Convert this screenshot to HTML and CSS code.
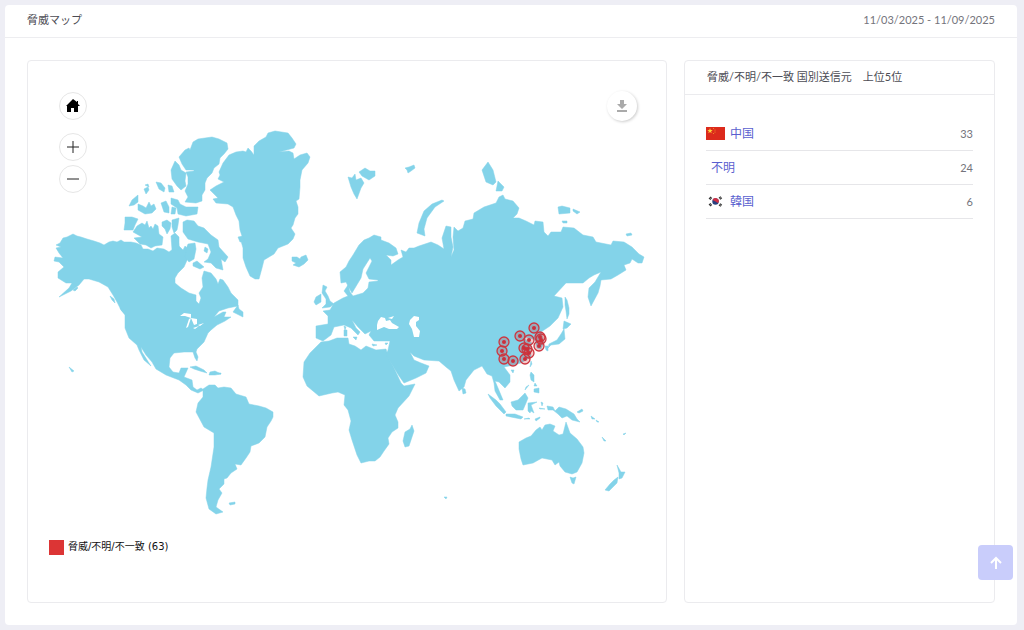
FILE: index.html
```html
<!DOCTYPE html>
<html lang="ja">
<head>
<meta charset="utf-8">
<meta name="viewport" content="width=device-width, initial-scale=1">
<title>脅威マップ</title>
<link rel="stylesheet" href="styles.css">
</head>
<body>
<main class="card">
  <header class="card-header">
    <h1 class="title">脅威マップ</h1>
    <span class="dates">11/03/2025 - 11/09/2025</span>
  </header>
  <div class="card-body">
    <section class="panel map-panel">
      <svg class="map" viewBox="27 61 638 462" role="img" aria-label="世界地図">
        <g class="land">
          <!-- North America -->
          <path d="M58 253L55 248L60 247L55 245L59 243L62 238L66 237L72 234L76 236L80 237L86 239L93 241L99 243L103 245L108 242L112 241L116 242L120 240L123 242L130 242L135 243L140 245L142 249L147 249L152 251L156 248L163 249L168 252L172 249L173 245L171 241L174 236L177 239L178 246L182 250L184 246L187 249L187 258L183 267L177 273L174 278L174 283L180 288L188 293L195 295L195 301L198 304L200 298L198 293L202 287L201 278L203 271L210 273L215 279L217 284L219 279L222 280L227 287L230 293L237 300L237 306L227 308L218 311L213 317L222 312L225 312L223 317L230 317L224 321L216 325L210 330L207 333L203 342L196 349L195 352L197 357L196 361L194 358L192 352L183 352L173 353L169 358L168 367L172 372L178 373L180 368L187 368L183 377L191 380L192 387L196 390L200 388L203 390L197 393L190 390L185 385L178 380L165 375L155 369L151 362L145 355L140 347L141 352L148 363L150 366L143 360L138 350L136 345L128 338L124 328L124 315L120 310L116 302L112 295L107 287L98 282L88 279L83 279L78 285L70 291L58 297L68 288L71 283L65 283L57 278L57 272L63 267L58 262L53 261L54 257L62 258Z"/>
          <path d="M109 296L113 299L114 303L111 300ZM119 308L124 310L127 314L127 316L121 311ZM232 312L237 305L238 309L242 312L242 317L238 315ZM72 290L76 287L77 288L74 291Z"/>
          <path d="M182 222L186 220L193 221L197 226L203 228L210 235L217 240L218 247L227 257L224 262L220 259L222 270L215 268L210 263L203 262L207 259L210 252L207 244L197 242L187 239L182 232Z"/>
          <path d="M187 244L194 243L195 249L193 259L188 262L184 257L185 249ZM192 263L196 261L203 267L199 269L192 266ZM204 247L207 249L206 253L203 251Z"/>
          <path d="M124 217L131 217L137 219L134 225L132 230L123 230L124 223Z"/>
          <path d="M132 232L136 226L141 223L144 225L146 221L148 228L150 226L152 229L154 224L157 226L158 234L162 237L161 245L154 246L150 248L145 245L139 244L133 238L141 237Z"/>
          <path d="M161 222L166 220L170 223L169 229L166 234L164 229L161 226ZM171 220L178 218L177 225L176 230L173 233L171 227ZM170 236L174 233L178 237L178 250L171 250Z"/>
          <path d="M128 206L131 200L137 195L137 202L133 205ZM143 189L147 187L148 190L145 194ZM144 185L147 184L148 187ZM155 182L160 183L164 188L163 192L158 189ZM167 185L171 186L173 192L168 192ZM137 204L142 206L145 208L148 202L150 206L153 204L155 209L151 213L144 214L137 210ZM160 203L165 201L168 207L168 213L163 212ZM171 207L175 208L174 214L170 214Z"/>
          <path d="M170 198L177 200L179 204L185 207L197 207L196 214L185 216L177 214L176 208L170 204Z"/>
          <path d="M170 170L174 161L178 165L180 170L185 173L184 181L185 186L180 190L176 186L171 179Z"/>
          <path d="M178 157L184 150L188 148L189 150L192 142L197 139L204 138L211 137L218 139L226 143L227 149L223 154L219 158L218 164L213 168L211 173L206 178L204 183L204 190L201 195L201 201L195 203L184 202L187 197L184 191L187 184L187 177L185 172L193 171L193 170L185 170L181 164Z"/>
          <path d="M189 367L195 366L203 370L206 373L199 371L193 369ZM209 372L214 371L220 374L214 375L208 375ZM217 373L220 373L220 374L217 374ZM68 367L73 371L71 372Z"/>
          <!-- Greenland, Iceland, Svalbard -->
          <path d="M209 190L215 186L223 182L217 179L219 175L218 172L222 163L228 155L235 152L242 151L245 152L247 148L250 151L253 155L253 146L258 141L265 137L267 133L274 131L287 133L291 138L295 144L293 148L278 152L288 151L292 153L293 159L299 155L306 153L309 157L307 163L301 170L299 180L299 187L298 199L295 201L297 207L297 214L294 218L292 225L290 228L294 234L292 239L287 244L277 248L273 254L263 260L261 268L258 279L254 279L249 276L245 267L242 258L242 248L240 241L241 236L239 230L238 221L235 215L232 207L227 204L215 203L212 199L217 198Z"/>
          <path d="M237 237L242 236L244 241L239 242ZM291 257L296 257L299 259L300 257L305 255L307 260L303 264L298 267L292 265L295 263L291 261Z"/>
          <path d="M347 177L351 178L354 174L355 180L360 178L363 183L360 188L356 199L353 194L350 187ZM358 172L364 168L369 171L374 171L374 176L368 180L361 176ZM404 168L408 167L413 165L414 168L410 171L407 173L406 170Z"/>
          <!-- South America -->
          <path d="M202 389L208 385L214 385L217 388L223 387L230 388L235 394L245 397L248 404L258 406L265 408L272 412L272 417L270 421L266 427L264 437L258 443L250 446L249 452L245 458L240 465L234 464L236 469L230 473L226 478L223 479L223 484L218 489L221 493L217 500L215 507L222 512L215 514L208 509L205 498L206 488L207 480L210 467L213 447L213 433L203 427L195 412L197 403L202 397Z"/>
          <path d="M228 503L234 502L234 504L229 505Z"/>
          <!-- Africa -->
          <path d="M320 342l8-1 8-3 11 0 1 6 6 2 6 4 5-4 10 4 10-1 3 10 5 9 7 15 3 3 11-2-6 12-11 12-3 7 3 7 0 6-6 4-4 6 1 6-5 7-4 6-5 4-6 0-8 2-4-8-5-15-3-10 2-9-3-11-4-5 1-10-7-3-6 1-13 3-6-5-6-5-4-9 1-15 6-9z"/>
          <path d="M411 425l2 6-5 15-4 1-2-6 2-9 5-3z"/>
          <!-- Eurasia -->
          <path d="M340 283L339 272L345 267L348 261L352 255L358 245L363 240L368 238L373 235L380 237L380 240L388 243L395 248L397 254L392 256L385 255L390 260L390 265L397 260L402 257L400 250L405 252L408 248L413 248L418 246L424 244L430 242L437 245L443 249L441 238L445 226L450 227L450 237L452 247L450 257L453 250L452 237L453 227L457 231L462 228L464 221L472 219L473 213L483 207L489 205L495 203L498 197L502 195L504 199L512 201L518 208L516 214L512 218L518 218L525 221L533 225L534 221L542 222L543 232L547 236L550 232L560 232L562 227L573 228L582 235L592 237L595 242L610 245L612 241L623 242L631 247L638 254L643 257L641 263L637 263L631 259L629 263L623 265L625 270L617 275L610 279L600 280L599 286L597 293L590 306L587 297L588 288L594 282L600 272L593 275L588 278L582 283L565 283L553 296L561 298L562 307L557 318L549 326L540 332L543 342L540 349L536 348L534 340L529 338L523 337L526 341L531 343L529 348L530 357L520 363L508 366L503 367L509 375L509 382L504 388L498 382L494 381L497 388L502 400L499 400L494 391L493 383L491 376L486 374L481 366L473 370L465 380L463 387L458 391L453 380L450 371L445 367L438 361L423 360L413 356L409 352L413 360L420 363L428 366L425 373L415 378L403 383L398 376L390 363L385 355L387 350L389 341L373 341L368 335L370 331L364 334L357 327L351 320L355 328L359 332L357 335L350 328L343 325L333 327L330 335L322 341L315 338L315 326L327 324L327 316L322 311L329 310L333 303L342 298L347 296L343 291L347 285L349 292L352 296L362 293L367 288L368 282L377 281L377 280L368 279L365 273L371 261L369 258L362 269L360 278L354 288L351 293L347 286L345 282Z"/>
          <path d="M322 285l4 2-2 4 3 5 2 5 4 3-4 3-8 1 4-4 0-5-4-6zM315 297l5-3 0 8-5 3-2-3zM343 326l2 1-1 3zM343 330l3 0 0 6-3 0zM352 337l4 0-1 3zM371 344l5 1-4 1zM384 343l3 0-2 2z"/>
          <path d="M443 201L434 207L426 218L423 229L424 236L416 233L418 223L423 211L431 204L441 200ZM487 162L492 170L495 182L492 185L485 182L481 170ZM497 181L503 187L501 191L495 191ZM557 207L561 206L569 208L569 213L558 214ZM572 209L579 212L576 214L572 211ZM561 221L566 221L566 223L562 223ZM625 234L630 233L631 235L626 236Z"/>
          <path d="M564 297l2 3 2 8 0 6-2 5-1-8-1-6zM563 321l7 3-4 4-4 1zM563 329l1 10-6 5-8 1-3 3 1-4 8-4 4-6zM544 346l3 0 0 5-2-1z"/>
          <!-- South-East Asia and Oceania -->
          <path d="M461 388l3 1 1 4-3 1zM530 361l1 3-2 3zM510 370l3 0-1 3zM530 372l3 3 0 7-3-2-1-5zM533 389l5-1 0 5-5-1zM534 383l2 3-3 0zM528 385l-4 5 1-3zM487 394l8 6 4 4 6 8-2 2-8-8-6-8zM505 414l9 0 8 3-2 2-15-3zM523 419l5-1 1 1zM534 419l5-2 0 1-4 3z"/>
          <path d="M510 402l7-2 7-7 3 5-2 5-3 7-7 0-4-4zM527 403l9-1-6 3 3 8-3-2-1 2-2-2zM540 402l2 1-1 3zM538 408l6 1-5 0zM546 406l6 1 2 4 4-4 7 2 8 5 3 5 3 3-8-2-5-4-5 2-4-4-5-4-5 0zM576 412l5-3 1 2-4 2zM590 416l4 3-3 0zM595 420l3 2-2 0zM601 437l4 4-2 0zM622 434l3-1-2 2z"/>
          <path d="M518 442L525 438L530 436L535 430L539 427L541 430L544 425L549 424L554 426L552 431L558 435L562 434L565 422L569 433L576 439L582 447L583 453L581 463L576 472L571 474L564 472L559 466L558 462L554 465L551 460L541 458L532 463L522 465L520 459L518 449Z"/>
          <path d="M569 477l3 1 3-1-2 7-2-1zM616 465l4 7 4 0-3 6-3 1 0-6zM617 477l-1 6-8 8-4-1 5-6 4-4zM443 497l3 0-1 2z"/>
        </g>
        <g class="water">
          <path d="M377 321l3-4 4 1 1 3 4-1 2 3 7 4-2 2-8 0-5-2-7 3 0-5zM387 318l6-2-2 3zM409 320l4-4 5 1 0 3-3 2 0 4 4 5-1 6-5 0-2-8-3-5z"/>
          <path d="M179 316l4-3 7 1 0 4-6-2zM188 319l-3 9 2-1 3-9zM190 318l6 1 0 5-3 1zM192 328l6-2-4 3zM197 325l6-2-4 3z"/>
        </g>
        <g class="pins">
          <g><circle cx="533" cy="328" r="5"/><circle cx="519" cy="336" r="5"/><circle cx="503" cy="342" r="5"/><circle cx="501" cy="351" r="5"/><circle cx="503" cy="359" r="5"/><circle cx="512" cy="361" r="5"/><circle cx="524" cy="359" r="5"/><circle cx="528" cy="340" r="5"/><circle cx="523" cy="348" r="5"/><circle cx="526" cy="349" r="5"/><circle cx="528" cy="353" r="5"/><circle cx="539" cy="337" r="5"/><circle cx="540" cy="339" r="5"/><circle cx="538" cy="346" r="5"/></g>
          <g class="dots"><circle cx="533" cy="328" r="2"/><circle cx="519" cy="336" r="2"/><circle cx="503" cy="342" r="2"/><circle cx="501" cy="351" r="2"/><circle cx="503" cy="359" r="2"/><circle cx="512" cy="361" r="2"/><circle cx="524" cy="359" r="2"/><circle cx="528" cy="340" r="2"/><circle cx="523" cy="348" r="2"/><circle cx="526" cy="349" r="2"/><circle cx="528" cy="353" r="2"/><circle cx="539" cy="337" r="2"/><circle cx="540" cy="340" r="2"/><circle cx="538" cy="346" r="2"/></g>
        </g>
      </svg>
      <div class="map-tools">
        <button class="round home" type="button" aria-label="ホーム"><svg width="14" height="14" viewBox="0 0 14 14"><path d="M7 0L0 7h1v6h4V9h3v4h4V7h2l-2-2V2h-1v1z"/></svg></button>
        <button class="round" type="button" aria-label="拡大"><svg width="14" height="14" viewBox="0 0 14 14"><path class="line" d="M1 7h12M7 1v12"/></svg></button>
        <button class="round" type="button" aria-label="縮小"><svg width="14" height="14" viewBox="0 0 14 14"><path class="line" d="M1 7h12"/></svg></button>
      </div>
      <button class="download" type="button" aria-label="ダウンロード"><svg width="12" height="14" viewBox="0 0 12 14"><path d="M4 1h4v4h3L6 10 1 5h3zM1 11h10v2H1z"/></svg></button>
      <div class="legend"><span class="swatch"></span>脅威/不明/不一致 (63)</div>
    </section>
    <section class="panel rank-panel">
      <h2 class="rank-title">脅威/不明/不一致 国別送信元　上位5位</h2>
      <ul class="ranks">
        <li class="rank">
          <svg class="flag" width="19" height="13" viewBox="0 0 19 13"><path fill="#dc2a1c" d="M0 0h19v13H0z"/><path fill="#ffd43a" d="M4 1l.7 1.9h2L5.100 4.200l.6 2L4 5l-1.700 1.200.6-2L1.300 2.900h2z"/><g fill="#f2912c"><circle cx="7.500" cy="1.500" r=".6"/><circle cx="9" cy="3" r=".6"/><circle cx="9" cy="5" r=".6"/><circle cx="7.500" cy="6.500" r=".6"/></g></svg>
          <a class="country" href="#cn">中国</a><span class="count">33</span>
        </li>
        <li class="rank"><a class="country" href="#unknown">不明</a><span class="count">24</span></li>
        <li class="rank">
          <svg class="flag" width="19" height="13" viewBox="0 0 19 13"><path fill="#fff" d="M0 0h19v13H0z"/><circle cx="9.500" cy="6.500" r="3.200" fill="#26407f"/><path fill="#cf2f44" d="M6.500 5.300a3.200 3.200 0 0 1 6.100 2.100C11.500 8.500 10.500 7 9.500 6.500S7.300 5 6.500 5.300z"/><path fill="none" stroke="#333" stroke-width="2.400" stroke-dasharray="1.200 .3" d="M3.500 4.300l2-2.300M13.500 2l2 2.300M3.500 8.700l2 2.300M13.500 11l2-2.300"/></svg>
          <a class="country" href="#kr">韓国</a><span class="count">6</span>
        </li>
      </ul>
    </section>
  </div>
</main>
<button class="to-top" type="button" aria-label="トップへ戻る"><svg width="14" height="14" viewBox="0 0 14 14"><path d="M7 13V2M2 7l5-5 5 5"/></svg></button>
</body>
</html>
```
FILE: styles.css
```css
* { box-sizing: border-box; }
body {
  margin: 0;
  padding: 5px 7px 5px 5px;
  min-height: 100vh;
  display: flex;
  background: #eeeef5;
  color: #4c4c54;
  font: 11px/16px Lato, "Noto Sans CJK JP", sans-serif;
}
button { padding: 0; cursor: pointer; }
.card {
  flex: 1;
  display: flex;
  flex-direction: column;
  background: #fff;
  border-radius: 4px;
}
.card-header {
  display: flex;
  justify-content: space-between;
  align-items: center;
  padding: 7px 22px 9px;
  border-bottom: 1px solid #ededf0;
}
.title, .rank-title { margin: 0; font-size: 11px; font-weight: 400; }
.dates { color: #74747c; }
.card-body {
  flex: 1;
  display: grid;
  grid-template-columns: 640fr 311fr;
  gap: 17px;
  padding: 22px;
}
.panel { border: 1px solid #ebebee; border-radius: 4px; }
.map-panel { position: relative; }
.map { display: block; width: 100%; }
.land { fill: #83d3e9; stroke: #83d3e9; stroke-width: .5; stroke-linejoin: round; }
.water { fill: #fff; }
.pins { fill: #d9303040; stroke: #cc3640; stroke-width: 1.3; }
.dots { fill: #cc2f3a; stroke: none; }
.map-tools {
  position: absolute;
  top: 31px;
  left: 31px;
  display: grid;
  gap: 4px;
}
.round {
  display: grid;
  place-items: center;
  width: 28px;
  height: 28px;
  border: 1px solid #e6e6e6;
  border-radius: 50%;
  background: #fff;
}
.home { margin-bottom: 9px; }
.line { fill: none; stroke: #222; }
.download {
  position: absolute;
  top: 30px;
  right: 29px;
  display: grid;
  place-items: center;
  width: 30px;
  height: 30px;
  border: 0;
  border-radius: 50%;
  background: #fff;
  box-shadow: 1px 1px 3px #0003;
  fill: #aaa;
}
.legend {
  display: flex;
  align-items: center;
  gap: 4px;
  padding: 16px 21px;
  color: #111;
  font: 10px/16px "DejaVu Sans", "Noto Sans CJK JP", sans-serif;
}
.swatch { width: 15px; height: 15px; background: #dc3535; }
.rank-title { padding: 8px 22px 9px; border-bottom: 1px solid #ebebee; }
.ranks { margin: 0; padding: 22px 21px; list-style: none; }
.rank {
  display: flex;
  align-items: center;
  gap: 5px;
  height: 34px;
  border-bottom: 1px solid #e6e6e9;
}
.country { color: #5a5fcf; font-size: 12px; text-decoration: none; }
.country:first-child { margin-left: 5px; }
.count { margin-left: auto; color: #74747c; }
.to-top {
  position: fixed;
  right: 11px;
  bottom: 50px;
  display: grid;
  place-items: center;
  width: 35px;
  height: 35px;
  border: 0;
  border-radius: 4px;
  background: #c9cdfb;
}
.to-top path { fill: none; stroke: #fff; stroke-width: 2; }
```
